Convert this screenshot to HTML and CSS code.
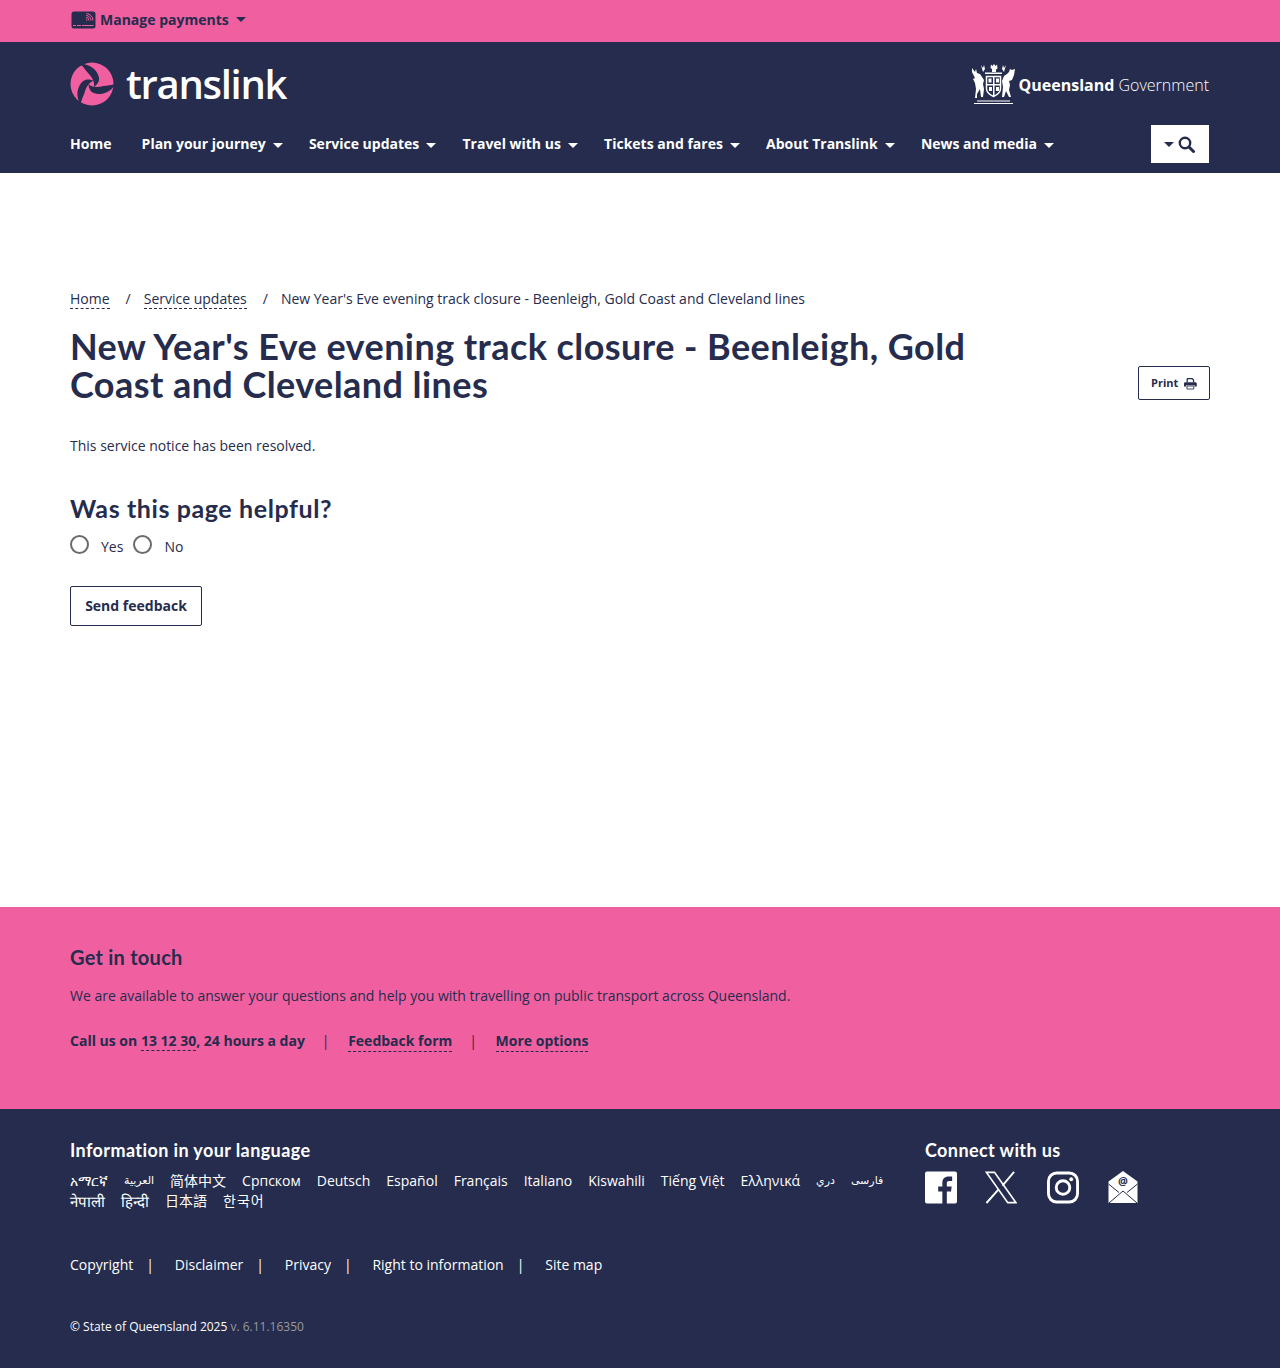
FILE: index.html
```html
<!DOCTYPE html>
<html lang="en">
<head>
  <meta charset="UTF-8">
  <meta name="viewport" content="width=device-width, initial-scale=1.0">
  <title>New Year's Eve evening track closure - Translink</title>
  <link rel="stylesheet" href="styles.css">
</head>
<body>
  <div class="topbar">
    <div class="wrap">
      <a class="manage" href="#">
        <svg class="card-icon" width="25" height="18" viewBox="0 0 25 18">
          <rect x="0.5" y="0.5" width="24" height="17" rx="2.5" fill="#252c4d"/>
          <path d="M2 14.5h3M6 14.5h4M11 14.5h11.5" stroke="#f060a0" stroke-width="1" fill="none"/>
          <path d="M15 8.5a1 1 0 0 1 1 1M15 6.5a3 3 0 0 1 3 3M15 4.5a5 5 0 0 1 5 5M15.500 2.500a7 7 0 0 1 6.500 7" stroke="#f060a0" stroke-width="1" fill="none"/>
        </svg>
        Manage payments
        <span class="caret caret-navy"></span>
      </a>
    </div>
  </div>

  <header class="site-head">
    <div class="wrap brand-row">
      <a class="logo" href="#">
        <svg width="44" height="44" viewBox="-22 -22 44 44">
          <circle r="21.500" fill="#f060a0"/>
          <g fill="#252c4d">
            <path id="arm" d="M-12 -20C-3 -21 6 -14 7 -6C7.500 -3 6 0 2 3C3 -2 0 -7 -4 -11C-7 -14.500 -9 -18 -12 -20Z"/>
            <use href="#arm" transform="rotate(120)"/>
            <use href="#arm" transform="rotate(240)"/>
          </g>
        </svg>
        <span class="logo-text">translink</span>
      </a>
      <a class="qg" href="#">
        <svg width="45" height="42" viewBox="0 0 45 42" fill="#fff">
          <path d="M20 1.500l1.500 1.500 1.500-2 1.500 2 1.500-1.500.5 4-1.500 1v2.500h-4V6l-1.500-1z"/>
          <path d="M14 9.500h17v1.500H14zM10 2l2 3 1-3 1 4-2 3zM35 2l-2 3-1-3-1 4 2 3z"/>
          <path d="M15.500 13.500h14v12c0 4-3.500 6.500-7 8-3.500-1.500-7-4-7-8z" fill="none" stroke="#fff" stroke-width="1.500"/>
          <path d="M22 14h1.500v19H22zM16 21h13v1.500H16zM17.500 15.500h3v4h-3zM25 15.500h3v4h-3zM18 24h3v4h-3zM25 24h3v4h-3z"/>
          <path d="M1 5l3 4 1-3 1 4 3 1 2 3 2 3-1 4 1 5-1 8h-2l-1-8-3 5v4H4l1-9-1-6-2-4 2-1-3-6z"/>
          <path d="M44 6l-1 6-2 5-3 1 1 4-1 5 2 7h-2l-3-6-2 6h-2l1-10-1-6 2-5 3-2 2-2 1-3 2 1z"/>
          <path d="M6 37.500h33v1H6zM3 40h39v1H3z"/>
        </svg>
        <span class="qg-text"><b>Queensland</b> Government</span>
      </a>
    </div>
    <div class="wrap nav-row">
      <nav class="main-nav">
        <a href="#">Home</a>
        <a href="#">Plan your journey<span class="caret"></span></a>
        <a href="#">Service updates<span class="caret"></span></a>
        <a href="#">Travel with us<span class="caret"></span></a>
        <a href="#">Tickets and fares<span class="caret"></span></a>
        <a href="#">About Translink<span class="caret"></span></a>
        <a href="#">News and media<span class="caret"></span></a>
      </nav>
      <button class="search-btn" type="button">
        <span class="caret caret-navy"></span>
        <svg width="17" height="17" viewBox="0 0 17 17" fill="none" stroke="#252c4d">
          <circle cx="7" cy="7" r="5.200" stroke-width="2.400"/>
          <path d="M11 11l4.500 4.500" stroke-width="3" stroke-linecap="round"/>
        </svg>
      </button>
    </div>
  </header>

  <main class="wrap content">
    <ol class="crumbs">
      <li><a href="#">Home</a></li>
      <li><a href="#">Service updates</a></li>
      <li>New Year's Eve evening track closure - Beenleigh, Gold Coast and Cleveland lines</li>
    </ol>
    <div class="title-row">
      <h1>New Year's Eve evening track closure - Beenleigh, Gold Coast and Cleveland lines</h1>
      <button class="print-btn" type="button">
        <span class="print-label">Print</span>
        <svg width="15" height="13" viewBox="0 0 15 13" fill="#252c4d">
          <path d="M3 5V1.500C3 .7 3.700 0 4.500 0H10l2 2v3h-1.500V2.800L9.400 1.500H4.500V5z"/>
          <path d="M1.500 5h12c.8 0 1.500.7 1.500 1.500V10h-2.500V8.500h-10V10H0V6.500C0 5.700 .7 5 1.500 5z"/>
          <path d="M3.500 9.500h8V13h-8z" fill="none" stroke="#252c4d"/>
        </svg>
      </button>
    </div>
    <p class="notice">This service notice has been resolved.</p>

    <h2>Was this page helpful?</h2>
    <div class="radios">
      <label><span class="radio"></span>Yes</label>
      <label><span class="radio"></span>No</label>
    </div>
    <button class="send-btn" type="button">Send feedback</button>
  </main>

  <section class="touch">
    <div class="wrap">
      <h3>Get in touch</h3>
      <p>We are available to answer your questions and help you with travelling on public transport across Queensland.</p>
      <div class="touch-links">
        <span>Call us on <a href="#">13 12 30</a>, 24 hours a day</span>
        <i>|</i>
        <a href="#">Feedback form</a>
        <i>|</i>
        <a href="#">More options</a>
      </div>
    </div>
  </section>

  <footer class="site-foot">
    <div class="wrap foot-cols">
      <div class="foot-lang">
        <h4>Information in your language</h4>
        <div class="langs">
          <a href="#">አማርኛ</a>
          <a class="lang-ar" href="#">العربية</a>
          <a href="#">简体中文</a>
          <a href="#">Српском</a>
          <a href="#">Deutsch</a>
          <a href="#">Español</a>
          <a href="#">Français</a>
          <a href="#">Italiano</a>
          <a href="#">Kiswahili</a>
          <a href="#">Tiếng Việt</a>
          <a href="#">Ελληνικά</a>
          <a class="lang-ar" href="#">دري</a>
          <a class="lang-ar" href="#">فارسی</a>
          <a class="lang-hi" href="#">नेपाली</a>
          <a class="lang-hi" href="#">हिन्दी</a>
          <a href="#">日本語</a>
          <a class="lang-ko" href="#">한국어</a>
        </div>
      </div>
      <div class="foot-social">
        <h4>Connect with us</h4>
        <div class="social-icons">
          <svg width="32" height="33" viewBox="0 0 33 33">
            <path fill="#fff" d="M2 0h29a2 2 0 0 1 2 2v29a2 2 0 0 1-2 2h-8.500V20.500h4.300l.7-5h-5v-3.200c0-1.500.5-2.400 2.500-2.400H28V5.400c-.5-.1-2-.2-3.700-.2-3.800 0-6.400 2.300-6.400 6.500v3.800h-4.300v5h4.300V33H2a2 2 0 0 1-2-2V2a2 2 0 0 1 2-2z"/>
          </svg>
          <svg width="32" height="33" viewBox="0 0 33 33">
            <path fill="none" stroke="#fff" stroke-width="1.700" d="M1.500 .9h8.300l22 31.200h-8.300z"/>
            <path fill="none" stroke="#fff" stroke-width="2" d="M30 .5L18 14.500M14 18.500L1.500 32.500"/>
          </svg>
          <svg class="insta" width="32" height="33" viewBox="0 0 33 33" fill="none" stroke="#fff" stroke-width="3">
            <rect x="1.500" y="1.500" width="30" height="30" rx="8.500"/>
            <circle cx="16.500" cy="16.500" r="7"/>
            <circle cx="25" cy="8" r="2" fill="#fff" stroke="none"/>
          </svg>
          <svg width="30" height="33" viewBox="0 0 30 33">
            <path fill="#fff" d="M15 0l14.500 10.500V32H.5V10.500z"/>
            <path fill="none" stroke="#252c4d" stroke-width="1" d="M.5 13L11 21.500M29.500 13L19 21.500M1 32l14-12 14 12"/>
            <text x="15" y="13.500" text-anchor="middle" class="at-sign">@</text>
          </svg>
        </div>
      </div>
    </div>
    <div class="wrap foot-links">
      <a href="#">Copyright</a><i>|</i>
      <a href="#">Disclaimer</a><i>|</i>
      <a href="#">Privacy</a><i>|</i>
      <a href="#">Right to information</a><i>|</i>
      <a href="#">Site map</a>
    </div>
    <div class="wrap copyright">© State of Queensland 2025 <span>v. 6.11.16350</span></div>
  </footer>
</body>
</html>
```

FILE: styles.css
```css
* {
  box-sizing: border-box;
}
body {
  margin: 0;
  font-family: "Open Sans", "Noto Sans CJK SC", sans-serif;
  font-size: 14px;
  line-height: 20px;
  color: #252c4d;
  background: #fff;
}
a {
  color: inherit;
  text-decoration: none;
}
.wrap {
  width: 1140px;
  margin: 0 auto;
}
h1, h2, h3, h4 {
  font-family: Lato, "Open Sans", sans-serif;
  margin: 0;
}

.caret {
  display: inline-block;
  width: 0;
  height: 0;
  border-left: 5px solid transparent;
  border-right: 5px solid transparent;
  border-top: 5px solid #fff;
  margin-left: 7px;
  vertical-align: 1px;
}
.caret-navy {
  border-top-color: #252c4d;
}

/* top pink strip */
.topbar {
  height: 42px;
  background: #f060a0;
}
.manage {
  display: inline-flex;
  align-items: center;
  height: 39px;
  margin-left: 1px;
  font-weight: 700;
}
.card-icon {
  margin-right: 4px;
}

/* header */
.site-head {
  height: 131px;
  background: #252c4d;
  color: #fff;
}
.brand-row {
  display: flex;
  justify-content: space-between;
  align-items: center;
  height: 83px;
}
.logo {
  display: flex;
  align-items: center;
  gap: 12px;
  margin-top: 1px;
}
.logo-text {
  font-size: 40px;
  line-height: 44px;
  font-weight: 600;
  letter-spacing: -1.300px;
}
.qg {
  display: flex;
  align-items: center;
  gap: 3px;
  margin-right: 1px;
  font-size: 16px;
  font-weight: 300;
}
.qg-text {
  margin-top: 2px;
}
.qg b {
  font-weight: 700;
}
.nav-row {
  display: flex;
  justify-content: space-between;
  align-items: center;
  padding-right: 1px;
}
.main-nav {
  display: flex;
  gap: 26.200px;
  font-weight: 700;
}
.main-nav a:first-child {
  margin-right: 4px;
}
.search-btn {
  width: 58px;
  height: 38px;
  border: 0;
  background: #fff;
  display: flex;
  align-items: center;
  justify-content: center;
  padding: 0 2px 0 0;
}
.search-btn .caret {
  margin: 0 4px 0 0;
}

/* content */
.content {
  min-height: 734px;
  padding-top: 116px;
}
.crumbs {
  list-style: none;
  display: flex;
  margin: 0;
  padding: 0;
}
.crumbs li + li::before {
  content: "/";
  margin: 0 13px 0 16px;
}
.crumbs a {
  border-bottom: 1px dashed #252c4d;
}
.title-row {
  display: flex;
  justify-content: space-between;
  align-items: flex-end;
  margin-top: 18px;
}
h1 {
  width: 930px;
  font-size: 36px;
  line-height: 38px;
  font-weight: 700;
  letter-spacing: 0.430px;
}
.print-btn {
  display: flex;
  align-items: center;
  gap: 6px;
  width: 72px;
  height: 34px;
  padding: 0 12px;
  border: 1px solid #252c4d;
  border-radius: 2px;
  background: #fff;
  color: #252c4d;
  font: 700 11px "Open Sans", sans-serif;
  margin-bottom: 3px;
}
.print-label {
  margin-top: -2px;
}
.notice {
  margin: 33px 0 0;
}
h2 {
  margin-top: 37px;
  font-size: 25px;
  line-height: 30px;
  font-weight: 700;
  letter-spacing: 0.600px;
}
.radios {
  display: flex;
  gap: 10px;
  margin-top: 14px;
}
.radios label {
  display: flex;
  align-items: center;
  gap: 12px;
}
.radio {
  width: 19px;
  height: 19px;
  border: 2px solid #6b6b6b;
  border-radius: 50%;
  margin-top: -5px;
}
.send-btn {
  display: block;
  margin-top: 29px;
  width: 132px;
  height: 40px;
  padding: 0 0 2px;
  border: 1px solid #252c4d;
  border-radius: 2px;
  background: #fff;
  color: #252c4d;
  font: 700 14px "Open Sans", sans-serif;
}

/* get in touch */
.touch {
  height: 202px;
  padding-top: 37px;
  background: #f060a0;
}
.touch h3 {
  font-size: 20px;
  line-height: 26px;
  font-weight: 700;
  letter-spacing: 0.250px;
}
.touch p {
  margin: 16px 0 0;
}
.touch-links {
  display: flex;
  margin-top: 25px;
  font-weight: 700;
}
.touch-links a {
  border-bottom: 1px dashed #252c4d;
}
.touch-links i {
  font-style: normal;
  font-weight: 400;
  margin: 0 18.600px 0 17px;
}

/* navy footer */
.site-foot {
  height: 259px;
  background: #252c4d;
  color: #fff;
  padding-top: 28px;
}
.foot-cols {
  display: flex;
}
.foot-lang {
  width: 855px;
}
.site-foot h4 {
  font-size: 18px;
  line-height: 26px;
  font-weight: 700;
  letter-spacing: 0.400px;
}
.langs {
  display: flex;
  flex-wrap: wrap;
  column-gap: 16px;
  margin-top: 8px;
}
.lang-ar {
  font-family: "DejaVu Sans", sans-serif;
  font-size: 11px;
}
.lang-hi {
  font-size: 15px;
}
.lang-ko {
  letter-spacing: 1px;
}
.social-icons {
  display: flex;
  align-items: center;
  gap: 28px;
  margin-top: 8px;
}
.insta {
  margin: 0 1px 0 2px;
}
.at-sign {
  font: 700 11px "Open Sans", sans-serif;
  fill: #252c4d;
}
.foot-links {
  display: flex;
  margin-top: 44px;
}
.foot-links i {
  font-style: normal;
  margin: 0 20.800px 0 13px;
}
.copyright {
  margin-top: 42px;
  font-size: 12px;
}
.copyright span {
  color: #9a9a9a;
}
```
